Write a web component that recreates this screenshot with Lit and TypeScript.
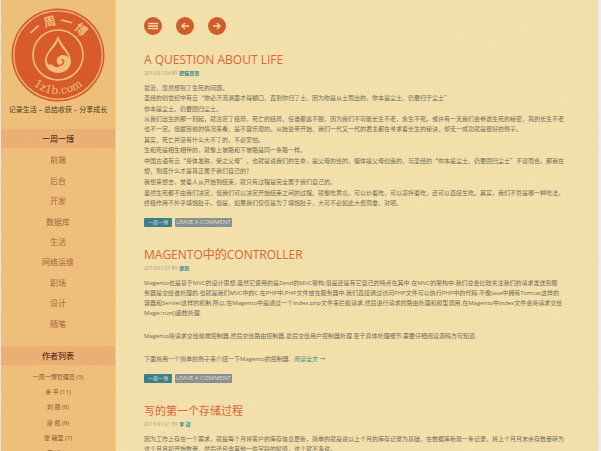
import { LitElement, html, css, svg, TemplateResult } from "lit";
import { customElement, property } from "lit/decorators.js";

const categories = ["前端", "后台", "开发", "数据库", "生活", "网络运维", "职场", "设计", "随笔"];
const authors = ["一周一博管理员 (3)", "余 平 (11)", "刘 丽 (8)", "廖 凯 (9)", "张 毓坚 (7)", "李 靖 (5)"];

interface Post {
  title: string;
  date: string;
  author: string;
  kind: string;
  paragraphs: string[][];
  more?: boolean;
}

const posts: Post[] = [
  {
    title: "A QUESTION ABOUT LIFE",
    date: "2013/01/24",
    author: "肥猫哥哥",
    kind: "essay",
    paragraphs: [
      [
        "最近，忽然想到了生死的问题。",
        "圣经的创世纪中有云“你必汗流满面才得糊口、直到你归了土、因为你是从土而出的，你本是尘土、仍要归于尘土”",
      ],
      [
        "你本是尘土、仍要回归尘土。",
        "从我们出生的那一刻起，就注定了结局，死亡的结局，任谁都逃不脱，因为我们不可能长生不老，永生不死。或许有一天我们会参透生死的秘密，真的长生不老",
        "也不一定。但据目前的情况来看，是不容乐观的。从始皇帝开始，我们一代又一代的君主都在寻求着长生的秘诀，却无一成功就是很好的例子。",
      ],
      [
        "其实，死亡并没有什么大不了的，不必害怕。",
        "生和死是相生相伴的，就像上坡路和下坡路是同一条路一样。",
      ],
      [
        "中国古语有云“身体发肤，受之父母”，也就是说我们的生命，是父母的给的，躯体是父母创造的，与圣经的“你本是尘土、仍要回归尘土”不谋而合。那我在",
        "想，到底什么才是真正属于我们自己的？",
      ],
      ["我想来想去，觉着人从开始到结束，就只有过程是完全属于我们自己的。"],
      [
        "虽然生死都不由我们决定，但我们可以决定开始结束之间的过程。就像吃黄瓜，可以炒着吃，可以凉拌着吃，还可以直接生吃。其实，我们不管是哪一种吃法，",
        "终极作用不外乎填饱肚子。但是，如果我们仅仅是为了填饱肚子，大可不必如此大费周章，对吧。",
      ],
    ],
  },
  {
    title: "MAGENTO中的CONTROLLER",
    date: "2013/01/21",
    author: "廖凯",
    kind: "spaced",
    paragraphs: [
      [
        "Magento也是基于MVC的设计思想,虽然它使用的是Zend的MVC架构,但是还是有它自己的特点在其中.在MVC的架构中,我们总会比较关注我们的请求发送到服",
        "务器是交给谁处理的,也就是我们MVC中的C.在PHP中,PHP文件放在服务器中,我们直接通过访问PHP文件可以执行PHP中的代码.不像Java中拥有Tomcat这样的",
        "容器和Servlet这样的机制.所以,在Magento中是通过一个index.php文件来拦截请求,然后进行请求的路由处理和模型调用.在Magento中index文件会将请求交给",
        "Mage::run()函数处理.",
      ],
      ["Magento将请求交给前端控制器,然后交给路由控制器,最后交给用户控制器处理.至于具体处理细节,需要仔细阅读源码方可知道."],
      ["下面将用一个简单的例子来介绍一下Magento的控制器. "],
    ],
    more: true,
  },
  {
    title: "写的第一个存储过程",
    date: "2013/01/21",
    author: "李 靖",
    kind: "essay",
    paragraphs: [
      [
        "因为工作上存在一个需求，就是每个月将客户的库存信息更新，简单的就是说以上个月的库存记录为基础，在数据库新建一条记录，将上个月月末余存数量转为",
        "这个月月初开始数量，然后还包含其他一些字段的赋值，这个就不多说。",
      ],
    ],
  },
];

@customElement("site-logo")
export class SiteLogo extends LitElement {
  static styles = css`
    :host { display: block; }
    .mark { display: block; width: 94px; height: 94px; margin: 0 auto; }
    .cn { font: 700 12px "Noto Sans CJK SC", sans-serif; }
    .en { font: 11px "DejaVu Serif", serif; }
  `;
  render() {
    return html`<svg class="mark" viewBox="0 0 94 94" role="img" aria-label="一周一博 1z1b.com">
      <defs>
        <path id="top" d="M17 47 A30 30 0 0 1 77 47" />
        <path id="bottom" d="M8 47 A39 39 0 0 0 86 47" />
      </defs>
      <circle cx="47" cy="47" r="46.5" fill="#d8592a" />
      <circle cx="47" cy="47" r="44.2" fill="none" stroke="#efb873" stroke-width="1.2" />
      <circle cx="47" cy="47" r="25" fill="none" stroke="#efc07a" stroke-width="1.6" />
      <path fill="#efc07a"
        d="M47 28 C50 37 60 44 60 53 C60 60 54 65 47 65 C40 65 34 60 34 53 C34 44 44 37 47 28 Z" />
      <path fill="#d8592a"
        d="M47 32 C49 39 57 45 58 50 C55 46 48 46 46 51 C45 55 47 57 50 57 C48 60 43 60 41 56 L40 58 L39 55 L38 57 C34 53 36 48 39 44 C43 39 46 36 47 32 Z" />
      <path d="M50 57 C53 56 54 52 51 52" fill="none" stroke="#d8592a" stroke-width="1.4" stroke-linecap="round" />
      <text class="cn" fill="#efc07a" text-anchor="middle"><textPath href="#top" startOffset="50%">一 周 一 博</textPath></text>
      <text class="en" fill="#efc07a" text-anchor="middle"><textPath href="#bottom" startOffset="50%">1z1b.com</textPath></text>
    </svg>`;
  }
}

@customElement("blog-post")
export class BlogPost extends LitElement {
  @property({ attribute: false }) post!: Post;

  static styles = css`
    :host { display: block; white-space: nowrap; }
    .title {
      margin: 0;
      font-size: 12px;
      line-height: 16px;
      font-weight: 400;
      color: #dc6434;
    }
    .title.han { font-size: 11px; }
    a { color: inherit; text-decoration: none; }
    .meta { margin: 1px 0 0; font-size: 5px; line-height: 8px; color: #a8a186; }
    .author { color: #3c8a8e; font-weight: 700; }
    .body {
      display: grid;
      gap: 1px;
      margin-top: 6px;
      font-size: 6px;
      line-height: 10px;
      color: #6f6b5b;
      text-spacing-trim: space-all;
    }
    .essay { font-family: "Noto Sans CJK SC", sans-serif; }
    .spaced { gap: 13px; }
    p { margin: 0; }
    .more { color: #3c8a8e; margin-left: 2px; }
    .tags { display: flex; gap: 3px; margin-top: 10px; font-size: 6px; line-height: 9px; color: #e4dfc4; }
    .tag { border-radius: 1px; padding: 0 1px; background: #85908f; }
    .category { background: #3a7f8c; font-size: 5px; padding: 0 4px; }
  `;
  render() {
    const p = this.post;
    const last = p.paragraphs.length - 1;
    return html`<article>
      <h2 class="title ${/^[A-Z]/.test(p.title) ? "" : "han"}"><a href="#post">${p.title}</a></h2>
      <div class="meta">${p.date} BY <a class="author" href="#author">${p.author}</a></div>
      <div class="body ${p.kind}">
        ${p.paragraphs.map(
          (lines, i) => html`<p>${lines.map((l, n) => html`${n ? html`<br />` : ""}${l}`)}${
            p.more && i === last ? html`<a class="more" href="#more">阅读全文 →</a>` : ""
          }</p>`
        )}
      </div>
      <div class="tags">
        <a class="tag category" href="#category">一周一博</a>
        <a class="tag" href="#comment">LEAVE A COMMENT</a>
      </div>
    </article>`;
  }
}

@customElement("app-root")
export class AppRoot extends LitElement {
  static styles = css`
    :host {
      display: grid;
      grid-template-columns: 115px 1fr;
      position: relative;
      height: 100vh;
      overflow: hidden;
      box-sizing: border-box;
      border-left: 1px solid #dfe6ec;
      border-right: 3px solid #e9edf3;
      background: #f4e0aa;
      font-family: "Open Sans", "Noto Sans CJK SC", sans-serif;
    }
    .grain { position: absolute; inset: 0; width: 100%; height: 100%; opacity: 0.04; pointer-events: none; }
    .side { background: #eebf79; border-right: 1px solid #f0cb86; padding-top: 8px; text-align: center; min-height: 100vh; box-sizing: border-box; }
    .tagline { margin: 2px 0 14px; font-size: 7px; line-height: 11px; color: #4f3a22; white-space: nowrap; }
    .heading { margin: 0; background: #ebb072; font-size: 8px; line-height: 19px; font-weight: 500; color: #5a3218; }
    ul { list-style: none; margin: 0; padding: 0; display: grid; align-items: center; }
    a { color: inherit; text-decoration: none; }
    .nav { min-height: 184px; margin: 2px 0 12px; font-size: 8px; line-height: 12px; color: #a8633c; }
    .authors { min-height: 92px; margin-top: 4px; font-size: 6px; line-height: 10px; color: #8c4c28; }
    .main { padding: 17px 24px 0 28px; min-width: 0; }
    .tools { display: flex; gap: 14px; margin-bottom: 17px; }
    .tool { width: 18px; height: 18px; padding: 0; border: 0; border-radius: 50%; background: #d15a2a; display: grid; place-items: center; }
    .tool svg { display: block; width: 10px; height: 10px; fill: none; stroke: #f1d79d; }
    .posts { display: grid; gap: 20px; }
  `;

  private tool(label: string, icon: TemplateResult) {
    return html`<button class="tool" type="button" aria-label=${label}><svg viewBox="0 0 10 10">${icon}</svg></button>`;
  }

  render() {
    return html`
      <aside class="side">
        <site-logo></site-logo>
        <p class="tagline">记录生活 – 总结收获 – 分享成长</p>
        <h2 class="heading">一周一博</h2>
        <ul class="nav">${categories.map((c) => html`<li><a href="#category">${c}</a></li>`)}</ul>
        <h2 class="heading">作者列表</h2>
        <ul class="authors">${authors.map((a) => html`<li><a href="#author">${a}</a></li>`)}</ul>
      </aside>
      <main class="main">
        <div class="tools">
          ${this.tool("菜单", svg`<path d="M0 2.5H10M0 5H10M0 7.5H10" stroke-width="1.3" />` as TemplateResult)}
          ${this.tool("上一页", svg`<path d="M9 5H2M5 2L2 5L5 8" stroke-width="1.5" />` as TemplateResult)}
          ${this.tool("下一页", svg`<path d="M1 5H8M5 2L8 5L5 8" stroke-width="1.5" />` as TemplateResult)}
        </div>
        <div class="posts">${posts.map((p) => html`<blog-post .post=${p}></blog-post>`)}</div>
      </main>
      <svg class="grain" aria-hidden="true">
        <filter id="paper"><feTurbulence type="fractalNoise" baseFrequency="0.4" numOctaves="2" /><feColorMatrix type="saturate" values="0" /></filter>
        <rect width="100%" height="100%" filter="url(#paper)" />
      </svg>
    `;
  }
}
